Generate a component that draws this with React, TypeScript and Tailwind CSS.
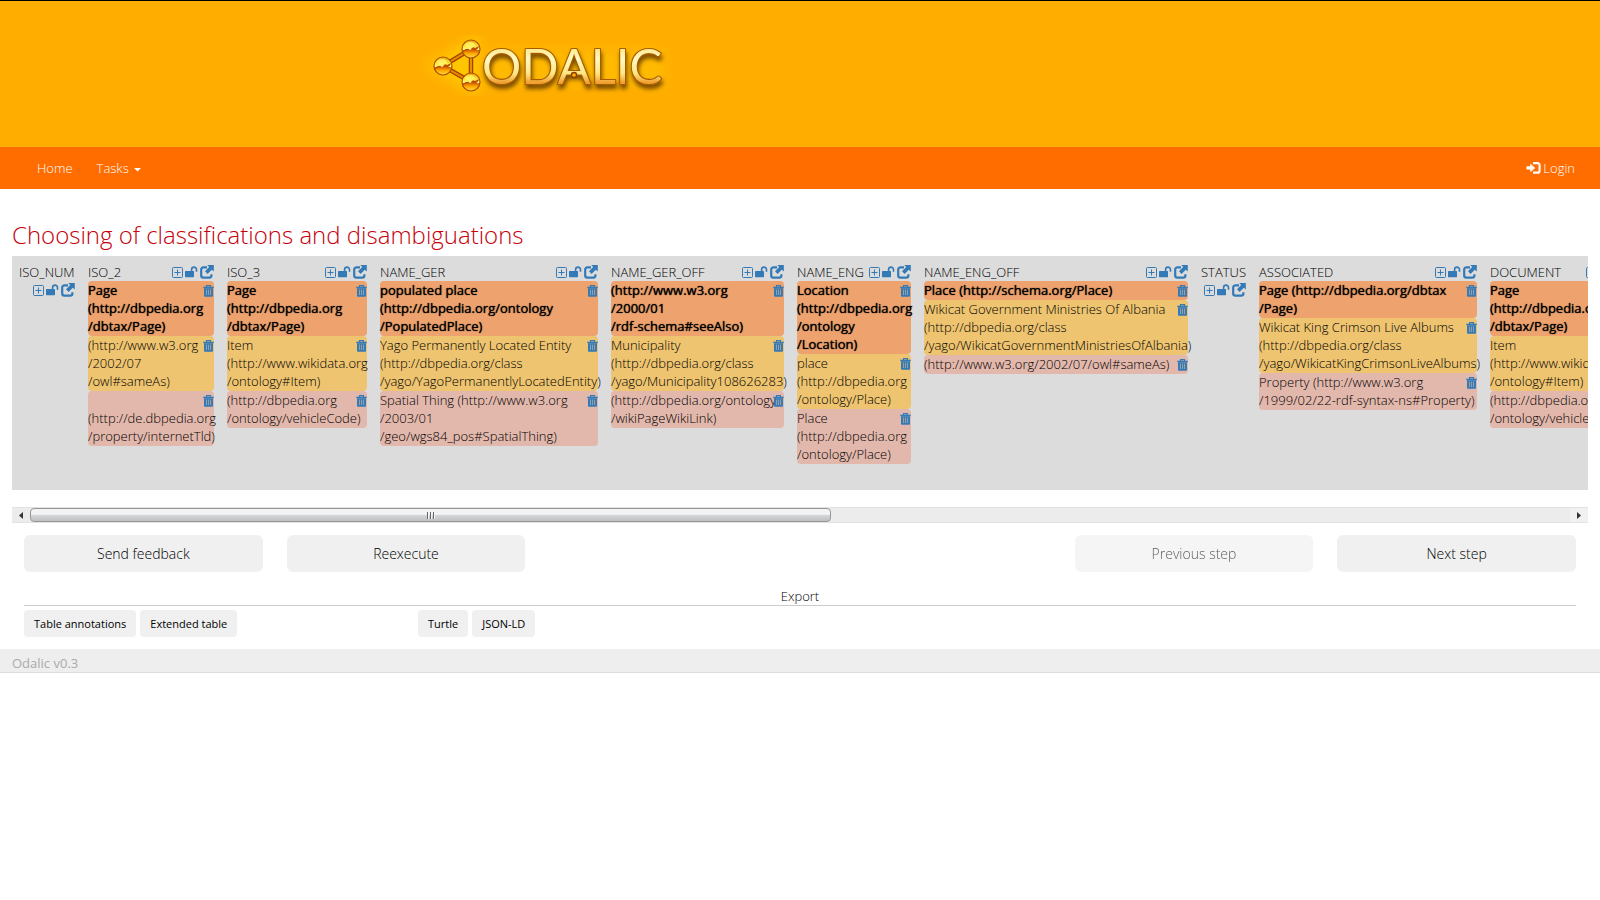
type Column = { name: string; width: string; items: string[][] };

const columns: Column[] = [
  { name: "ISO_NUM", width: "w-[69px]", items: [] },
  {
    name: "ISO_2",
    width: "w-[139px]",
    items: [
      ["Page", "(http://dbpedia.org", "/dbtax/Page)"],
      ["(http://www.w3.org", "/2002/07", "/owl#sameAs)"],
      ["", "(http://de.dbpedia.org", "/property/internetTld)"],
    ],
  },
  {
    name: "ISO_3",
    width: "w-[153px]",
    items: [
      ["Page", "(http://dbpedia.org", "/dbtax/Page)"],
      ["Item", "(http://www.wikidata.org", "/ontology#Item)"],
      ["(http://dbpedia.org", "/ontology/vehicleCode)"],
    ],
  },
  {
    name: "NAME_GER",
    width: "w-[231px]",
    items: [
      ["populated place", "(http://dbpedia.org/ontology", "/PopulatedPlace)"],
      ["Yago Permanently Located Entity", "(http://dbpedia.org/class", "/yago/YagoPermanentlyLocatedEntity)"],
      ["Spatial Thing (http://www.w3.org", "/2003/01", "/geo/wgs84_pos#SpatialThing)"],
    ],
  },
  {
    name: "NAME_GER_OFF",
    width: "w-[186px]",
    items: [
      ["(http://www.w3.org", "/2000/01", "/rdf-schema#seeAlso)"],
      ["Municipality", "(http://dbpedia.org/class", "/yago/Municipality108626283)"],
      ["(http://dbpedia.org/ontology", "/wikiPageWikiLink)"],
    ],
  },
  {
    name: "NAME_ENG",
    width: "w-[127px]",
    items: [
      ["Location", "(http://dbpedia.org", "/ontology", "/Location)"],
      ["place", "(http://dbpedia.org", "/ontology/Place)"],
      ["Place", "(http://dbpedia.org", "/ontology/Place)"],
    ],
  },
  {
    name: "NAME_ENG_OFF",
    width: "w-[277px]",
    items: [
      ["Place (http://schema.org/Place)"],
      ["Wikicat Government Ministries Of Albania", "(http://dbpedia.org/class", "/yago/WikicatGovernmentMinistriesOfAlbania)"],
      ["(http://www.w3.org/2002/07/owl#sameAs)"],
    ],
  },
  { name: "STATUS", width: "w-[58px]", items: [] },
  {
    name: "ASSOCIATED",
    width: "w-[231px]",
    items: [
      ["Page (http://dbpedia.org/dbtax", "/Page)"],
      ["Wikicat King Crimson Live Albums", "(http://dbpedia.org/class", "/yago/WikicatKingCrimsonLiveAlbums)"],
      ["Property (http://www.w3.org", "/1999/02/22-rdf-syntax-ns#Property)"],
    ],
  },
  {
    name: "DOCUMENT",
    width: "w-[151px]",
    items: [
      ["Page", "(http://dbpedia.org", "/dbtax/Page)"],
      ["Item", "(http://www.wikidata.org", "/ontology#Item)"],
      ["(http://dbpedia.org", "/ontology/vehicleCode)"],
    ],
  },
];

const rankStyles = [
  "bg-[#eea26e] font-medium [text-shadow:0_0_1px_#000]",
  "bg-[#eec470]",
  "bg-[#e3b8ac]",
];

function PlusIcon() {
  return (
    <svg width="11" height="11" viewBox="0 0 11 11" fill="none" stroke="#337ab7" aria-hidden="true">
      <rect x="0.5" y="0.5" width="10" height="10" rx="1" />
      <path d="M5.5 2.5v6M2.5 5.5h6" />
    </svg>
  );
}

function UnlockIcon() {
  return (
    <svg width="13" height="12" viewBox="0 0 13 12" aria-hidden="true">
      <path d="M6.6 5.5V3.6a2.4 2.4 0 0 1 4.9 0V5.8" fill="none" stroke="#337ab7" strokeWidth="1.6" />
      <rect x="0" y="5" width="9" height="6.2" rx="0.6" fill="#337ab7" />
    </svg>
  );
}

function ShareIcon() {
  return (
    <svg width="14" height="14" viewBox="0 0 14 14" aria-hidden="true">
      <path d="M7 2.4H3.4A2.2 2.2 0 0 0 1.2 4.6v5.8a2.2 2.2 0 0 0 2.2 2.2h5.8a2.2 2.2 0 0 0 2.2-2.2V9.2" fill="none" stroke="#337ab7" strokeWidth="2.2" />
      <path d="M7.2 0H13.8V6.6L11.8 4.7L7.6 8.9L5 6.3L9.2 2.1Z" fill="#337ab7" />
    </svg>
  );
}

function TrashIcon() {
  return (
    <svg width="11" height="12" viewBox="0 0 11 12" aria-hidden="true">
      <path d="M3.5 2V0.6h4V2" fill="none" stroke="#337ab7" strokeWidth="1.1" />
      <rect x="0.3" y="1.7" width="10.4" height="1.5" fill="#337ab7" />
      <path d="M1 3.2h9v7.5a1 1 0 0 1-1 1H2a1 1 0 0 1-1-1z" fill="#337ab7" />
      <path d="M3.5 4.6v5.4M5.5 4.6v5.4M7.5 4.6v5.4" stroke="#a3a4a0" strokeWidth="0.9" />
    </svg>
  );
}

function LoginIcon() {
  return (
    <svg width="15" height="12" viewBox="0 0 15 12" aria-hidden="true">
      <path d="M7 1.1h4.6a2 2 0 0 1 2 2v5.6a2 2 0 0 1-2 2H7" fill="none" stroke="#fff" strokeWidth="2.2" />
      <path d="M0.5 4.2h3.8V1.6L9.2 5.9L4.3 10.2V7.6H0.5z" fill="#fff" />
    </svg>
  );
}

function Logo() {
  const nodes = [
    [25, 35],
    [53, 18],
    [53, 51],
  ];
  return (
    <svg width="280" height="90" viewBox="0 0 280 90" role="img" aria-label="Odalic">
      <defs>
        <linearGradient id="metal" x1="0" y1="0" x2="0" y2="1">
          <stop offset="0.2" stopColor="#ffe98a" />
          <stop offset="0.4" stopColor="#fff8c0" />
          <stop offset="0.65" stopColor="#ffe680" />
          <stop offset="0.8" stopColor="#f0a030" />
        </linearGradient>
        <linearGradient id="ball" x1="0" y1="0" x2="0" y2="1">
          <stop offset="0" stopColor="#f0a400" />
          <stop offset="0.42" stopColor="#fff04a" />
          <stop offset="0.54" stopColor="#fff9a0" />
          <stop offset="0.58" stopColor="#d86a00" />
          <stop offset="0.75" stopColor="#ffa800" />
          <stop offset="1" stopColor="#ffe040" />
        </linearGradient>
        <filter id="glow" x="-20%" y="-40%" width="140%" height="180%">
          <feGaussianBlur stdDeviation="6" />
        </filter>
        <filter id="shade" x="-20%" y="-40%" width="140%" height="180%">
          <feDropShadow dx="1" dy="4" stdDeviation="2" floodColor="#6b3c00" floodOpacity="0.9" />
        </filter>
      </defs>
      <g filter="url(#glow)" opacity="0.7" fill="none" stroke="#ffd000">
        <path d="M25 35L53 18V51z" strokeWidth="18" />
        <path d="M72 36H246" strokeWidth="34" strokeOpacity="0.5" />
      </g>
      <path d="M25 35L53 18V51z" fill="none" stroke="#9c4400" strokeWidth="4.5" />
      <path d="M25 35L53 18V51z" fill="none" stroke="#f08a00" strokeWidth="2" />
      {nodes.map(([x, y]) => (
        <g key={`${x}-${y}`}>
          <circle cx={x} cy={y} r="9" fill="url(#ball)" stroke="#a85000" strokeWidth="1.2" />
          <path d={`M${x - 8} ${y + 2}q4 -4 7 -1l3 -3l2 1l4 -2q-1 5 -6 4t-10 2z`} fill="#c05000" />
          <ellipse cx={x - 1} cy={y - 4} rx="5" ry="3" fill="#fff46a" opacity="0.8" />
        </g>
      ))}
      <g fontFamily="Lato, sans-serif" fontWeight="400" fontSize="49" strokeLinejoin="round">
        <text x="64" y="53" fill="url(#metal)" stroke="#a85c04" strokeWidth="2.2" paintOrder="stroke" filter="url(#shade)">
          ODALIC
        </text>
        <circle cx="156" cy="44" r="2.6" fill="#ffae00" stroke="#8c4000" strokeWidth="1.5" />
      </g>
    </svg>
  );
}

function Item({ lines, rank }: { lines: string[]; rank: number }) {
  return (
    <div className={`flex items-start justify-between rounded pb-px ${rankStyles[rank]}`}>
      <div className="min-w-0 flex-1 whitespace-nowrap">
        {lines.map((line, i) => (
          <div key={i} className="h-[18px]">
            {line}
          </div>
        ))}
      </div>
      <button type="button" aria-label="Remove" className="-ml-3 mt-1 shrink-0">
        <TrashIcon />
      </button>
    </div>
  );
}

function ColumnHeader({ column }: { column: Column }) {
  return (
    <th scope="col" className={`${column.width} pt-[7px] pr-[6px] pl-[7px] text-left align-top font-light`}>
      <div className="flex flex-wrap items-start justify-between">
        <span>{column.name}</span>
        <span className="ml-auto flex h-[18px] items-center gap-[2px]">
          <button type="button" aria-label="Add"><PlusIcon /></button>
          <button type="button" aria-label="Unlock"><UnlockIcon /></button>
          <button type="button" aria-label="Open"><ShareIcon /></button>
        </span>
      </div>
      {column.items.map((lines, i) => (
        <Item key={i} lines={lines} rank={i} />
      ))}
    </th>
  );
}

function ScrollBar() {
  return (
    <div className="flex h-4 items-stretch border-y border-[#e3e3e3] bg-[#ececec]">
      <button type="button" aria-label="Scroll left" className="flex w-[18px] items-center justify-center">
        <svg width="4" height="7" viewBox="0 0 4 7" aria-hidden="true"><path d="M4 0v7L0 3.5z" fill="#333" /></svg>
      </button>
      <div className="flex flex-1">
        <div className="flex w-[52%] items-center justify-center rounded-sm border border-[#969696] bg-linear-to-b from-[#f3f3f3] from-45% via-[#d6d7d8] via-50% to-[#bfc0c2]">
          <svg width="9" height="7" viewBox="0 0 9 7" aria-hidden="true">
            <path d="M1.5 0v7M4.5 0v7M7.5 0v7" stroke="#666" />
            <path d="M2.5 0v7M5.5 0v7M8.5 0v7" stroke="#f6f6f6" />
          </svg>
        </div>
      </div>
      <button type="button" aria-label="Scroll right" className="flex w-[18px] items-center justify-center bg-[#f1f1f1]">
        <svg width="4" height="7" viewBox="0 0 4 7" aria-hidden="true"><path d="M0 0v7L4 3.5z" fill="#333" /></svg>
      </button>
    </div>
  );
}

const stepButton = "h-[37px] rounded-md bg-[#f0f0f0] text-[14px] text-black";
const exportButton = "h-[27px] rounded bg-[#f0f0f0] px-[10px] text-[11px] font-normal text-black";

export default function App() {
  return (
    <div className="bg-white font-['Open_Sans',sans-serif] text-[13px] leading-[18px] font-light text-black">
      <header className="h-[147px] border-t border-black bg-[#ffae00] pt-[30px] pl-[418px]">
        <Logo />
      </header>
      <nav className="flex h-[42px] items-center justify-between bg-[#ff6c00] pr-[25px] pl-[37px] text-white">
        <div className="flex gap-6">
          <a href="#home">Home</a>
          <a href="#tasks" className="flex items-center gap-[5px]">
            Tasks
            <svg width="7" height="4" viewBox="0 0 7 4" className="mt-[3px]" aria-hidden="true"><path d="M0 0h7L3.5 3.5z" fill="#fff" /></svg>
          </a>
        </div>
        <a href="#login" className="flex items-center gap-[2px]">
          <LoginIcon />
          Login
        </a>
      </nav>

      <main className="px-3">
        <h1 className="pt-[30px] pb-[5px] text-[24px] leading-8 font-light text-[#c5000b]">
          Choosing of classifications and disambiguations
        </h1>
        <div className="overflow-hidden bg-[#dcdcdc] pb-[26px]">
          <table className="w-[1622px] table-fixed border-collapse">
            <thead>
              <tr>
                {columns.map((column) => (
                  <ColumnHeader key={column.name} column={column} />
                ))}
              </tr>
            </thead>
          </table>
        </div>
        <div className="pt-[17px]">
          <ScrollBar />
        </div>

        <div className="grid grid-cols-6 pt-3">
          <button type="button" className={`mx-3 ${stepButton}`}>Send feedback</button>
          <button type="button" className={`mx-3 ${stepButton}`}>Reexecute</button>
          <button type="button" disabled className={`col-start-5 mx-3 opacity-65 ${stepButton}`}>Previous step</button>
          <button type="button" className={`mx-3 ${stepButton}`}>Next step</button>
        </div>

        <section className="mx-3 pt-[15px]">
          <h2 className="border-b border-[#ccc] text-center">Export</h2>
        </section>
        <div className="grid grid-cols-4 pt-1 pb-3">
          <div className="flex gap-1 px-3">
            <button type="button" className={exportButton}>Table annotations</button>
            <button type="button" className={exportButton}>Extended table</button>
          </div>
          <div className="flex gap-1 px-3">
            <button type="button" className={exportButton}>Turtle</button>
            <button type="button" className={exportButton}>JSON-LD</button>
          </div>
        </div>
      </main>

      <footer className="h-6 border-b border-[#ddd] bg-[#eee] px-3 pt-[5px] font-normal text-[#aaa]">Odalic v0.3</footer>
    </div>
  );
}
